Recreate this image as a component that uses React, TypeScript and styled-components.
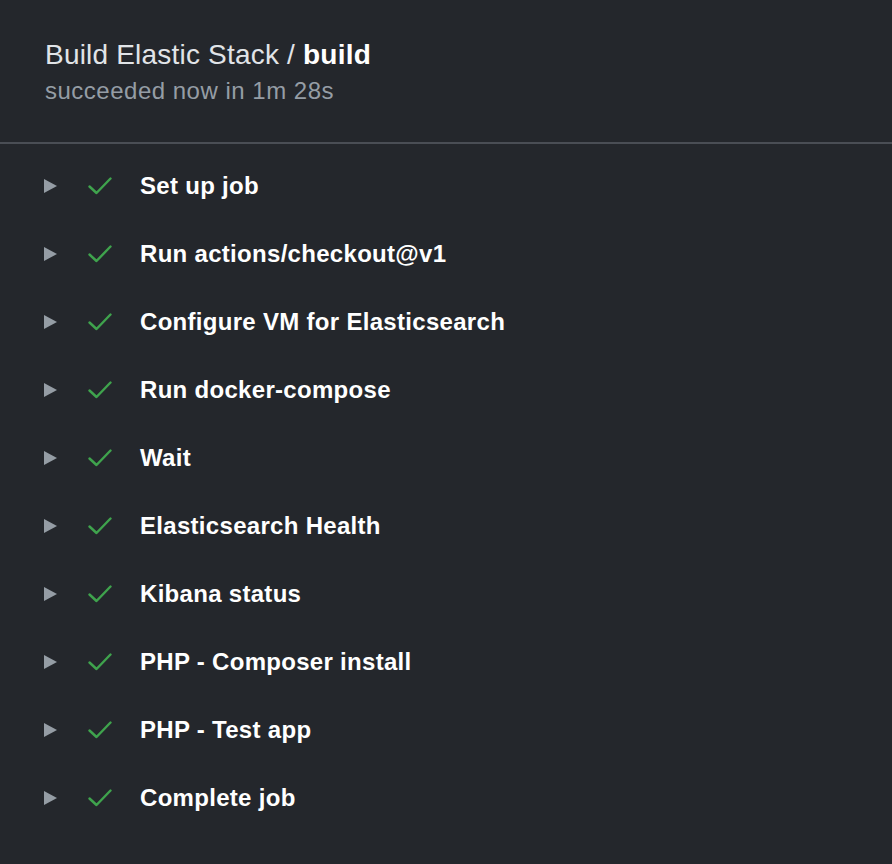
import React from 'react';
import styled, { createGlobalStyle } from 'styled-components';

const GlobalStyle = createGlobalStyle`
  html, body {
    margin: 0;
    padding: 0;
    background: #24272c;
  }
  body {
    font-family: 'Liberation Sans', Arial, sans-serif;
  }
`;

const Page = styled.div`
  width: 892px;
  min-height: 864px;
  background: #24272c;
`;

const Header = styled.header`
  height: 144px;
  box-sizing: border-box;
  padding: 39px 45px 0;
  border-bottom: 2px solid #4a4e55;
`;

const Title = styled.h1`
  margin: 0;
  font-size: 28px;
  font-weight: 400;
  line-height: 32px;
  letter-spacing: 0.2px;
  color: #e1e4e8;

  strong {
    font-weight: 700;
    color: #ffffff;
  }
`;

const Subtitle = styled.div`
  margin-top: 6px;
  font-size: 24px;
  line-height: 28px;
  letter-spacing: 0.5px;
  color: #959da5;
`;

const StepList = styled.ul`
  list-style: none;
  margin: 0;
  padding: 8px 0 0;
`;

const Step = styled.li`
  height: 68px;
  display: flex;
  align-items: center;
  padding-left: 44px;
`;

const Caret = styled.span`
  width: 0;
  height: 0;
  border-top: 7px solid transparent;
  border-bottom: 7px solid transparent;
  border-left: 13px solid #959da5;
  margin-right: 31px;
`;

const Check = styled.svg`
  width: 24px;
  height: 18px;
  margin-right: 28px;
  flex-shrink: 0;
`;

const StepName = styled.span`
  font-size: 24px;
  font-weight: 700;
  color: #ffffff;
  letter-spacing: 0.3px;
`;

const steps = [
  'Set up job',
  'Run actions/checkout@v1',
  'Configure VM for Elasticsearch',
  'Run docker-compose',
  'Wait',
  'Elasticsearch Health',
  'Kibana status',
  'PHP - Composer install',
  'PHP - Test app',
  'Complete job',
];

const App: React.FC = () => {
  return (
    <Page>
      <GlobalStyle />
      <Header>
        <Title>
          Build Elastic Stack / <strong>build</strong>
        </Title>
        <Subtitle>succeeded now in 1m 28s</Subtitle>
      </Header>
      <StepList>
        {steps.map((name) => (
          <Step key={name}>
            <Caret />
            <Check viewBox="0 0 24 18">
              <path
                d="M1.5 9.5 L8.5 16 L22.5 1.5"
                fill="none"
                stroke="#3fa34d"
                strokeWidth="2.4"
                strokeLinecap="round"
                strokeLinejoin="round"
              />
            </Check>
            <StepName>{name}</StepName>
          </Step>
        ))}
      </StepList>
    </Page>
  );
};

export default App;
